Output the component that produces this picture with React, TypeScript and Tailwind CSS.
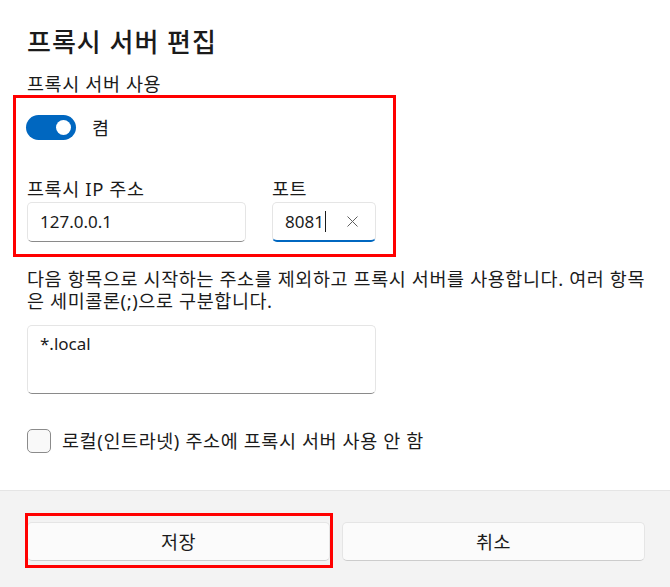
import React from 'react';

const Field: React.FC<{ label: string; width: string; children: React.ReactNode; focused?: boolean }> = ({
  label,
  width,
  children,
  focused,
}) => (
  <div className={`flex flex-col ${width}`}>
    <div className="text-[18.5px] leading-[24px] tracking-[0.6px]">{label}</div>
    <div
      className={`mt-[1px] h-[40px] flex items-center rounded-[5px] border border-[#e5e5e5] bg-white pl-[12px] ${
        focused ? 'border-b-2 border-b-[#0067c0]' : 'border-b-[#8a8a8a]'
      }`}
    >
      {children}
    </div>
  </div>
);

export default function App() {
  return (
    <div className="relative w-[670px] h-[587px] flex flex-col overflow-hidden bg-white text-[#1b1b1b] [font-family:'Noto_Sans','Noto_Sans_CJK_KR',sans-serif]">
      {/* Dialog body */}
      <div className="relative flex-1 pl-[27px] pr-[20px] pt-[26px]">
        <h1 className="text-[26px] leading-[32px] font-medium tracking-[1px]">프록시 서버 편집</h1>
        <div className="mt-[14px] text-[18.5px] leading-[24px] tracking-[0.6px]">프록시 서버 사용</div>

        {/* Toggle */}
        <div className="mt-[19px] h-[25px] flex items-center -ml-px">
          <div className="w-[50px] h-[25px] rounded-full bg-[#0067c0] flex items-center justify-end pr-[5px]">
            <div className="w-[15px] h-[15px] rounded-full bg-white" />
          </div>
          <span className="ml-[16px] text-[18.5px] leading-[24px]">켬</span>
        </div>

        {/* Address + port */}
        <div className="mt-[37px] flex gap-[26px]">
          <Field label="프록시 IP 주소" width="w-[219px]">
            <span className="text-[17px]">127.0.0.1</span>
          </Field>
          <Field label="포트" width="w-[104px]" focused>
            <span className="text-[17px]">8081</span>
            <span className="ml-px w-px h-[21px] bg-[#1b1b1b]" />
            <svg className="ml-auto mr-[17px]" width="11" height="11" viewBox="0 0 11 11">
              <path d="M0.5 0.5 L10.5 10.5 M10.5 0.5 L0.5 10.5" stroke="#5f5f5f" strokeWidth="1" />
            </svg>
          </Field>
        </div>

        <p className="mt-[26px] text-[18.5px] leading-[22px] tracking-[0.6px]">
          다음 항목으로 시작하는 주소를 제외하고 프록시 서버를 사용합니다. 여러 항목은 세미콜론(;)으로 구분합니다.
        </p>

        {/* Exceptions box */}
        <div className="mt-[13px] w-[349px] h-[69px] rounded-[5px] border border-[#e5e5e5] border-b-[#8a8a8a] bg-white pl-[12px] pt-[6px]">
          <span className="text-[17px] leading-[24px]">*.local</span>
        </div>

        {/* Checkbox */}
        <div className="mt-[35px] flex items-center gap-[11px]">
          <div className="w-[24px] h-[24px] rounded-[5px] border border-[#8b8b8b] bg-[#f9f9f9]" />
          <span className="text-[18.5px] leading-[24px] tracking-[0.6px]">로컬(인트라넷) 주소에 프록시 서버 사용 안 함</span>
        </div>

        {/* Annotation */}
        <div className="pointer-events-none absolute left-[13px] top-[95px] w-[383px] h-[162px] border-[3px] border-[#ff0000]" />
      </div>

      {/* Footer */}
      <div className="h-[97px] shrink-0 border-t border-[#e5e5e5] bg-[#f3f3f3] pt-[31px] pl-[27px] pr-[25px] flex items-start gap-[12px]">
        <div className="relative flex-1">
          <button className="w-full h-[39px] rounded-[5px] border border-[#e5e5e5] border-b-[#cccccc] bg-[#fbfbfb] text-[18.5px] tracking-[0.6px]">
            저장
          </button>
          <div className="pointer-events-none absolute -left-[2px] -right-[3px] -top-[9px] -bottom-[7px] border-[3px] border-[#ff0000]" />
        </div>
        <div className="flex-1">
          <button className="w-full h-[39px] rounded-[5px] border border-[#e5e5e5] border-b-[#cccccc] bg-[#fbfbfb] text-[18.5px] tracking-[0.6px]">
            취소
          </button>
        </div>
      </div>
    </div>
  );
}
